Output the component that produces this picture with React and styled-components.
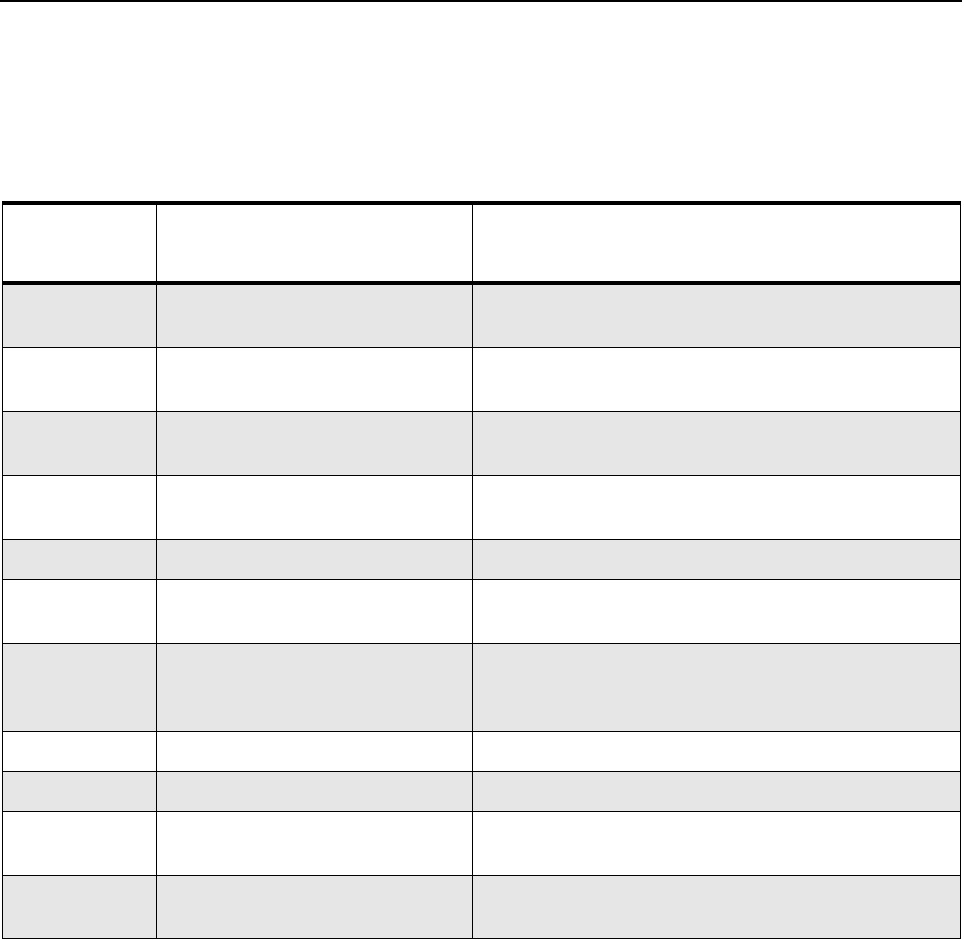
import React from "react";
import styled, { createGlobalStyle } from "styled-components";

const GlobalStyle = createGlobalStyle`
  html, body {
    margin: 0;
    padding: 0;
    background: #ffffff;
    font-family: "Liberation Sans", Arial, sans-serif;
  }
  * { box-sizing: border-box; }
`;

const Page = styled.div`
  display: flex;
  flex-direction: column;
  width: 964px;
`;

const TopRule = styled.div`
  width: 962px;
  height: 2px;
  background: #000000;
`;

const Table = styled.div`
  margin: 199px 0 0 2px;
  width: 959px;
  border-top: 4px solid #000000;
  border-left: 1px solid #000000;
  border-right: 1px solid #000000;
  display: flex;
  flex-direction: column;
`;

const Row = styled.div`
  display: grid;
  grid-template-columns: 153px 316px 488px;
  height: ${(p) => p.$h}px;
  background: ${(p) => (p.$shaded ? "#e6e6e6" : "#ffffff")};
  border-bottom: ${(p) => (p.$header ? "4px" : "1px")} solid #000000;
`;

const Cell = styled.div`
  font-size: 13px;
  color: #000000;
  padding: 6px 8px;
  & + & {
    border-left: 1px solid #000000;
  }
`;

const rows = [
  { h: 63, shaded: true },
  { h: 64, shaded: false },
  { h: 64, shaded: true },
  { h: 64, shaded: false },
  { h: 40, shaded: true },
  { h: 64, shaded: false },
  { h: 88, shaded: true },
  { h: 40, shaded: false },
  { h: 40, shaded: true },
  { h: 64, shaded: false },
  { h: 63, shaded: true },
];

export default function App() {
  return (
    <>
      <GlobalStyle />
      <Page>
        <TopRule />
        <Table>
          <Row $h={80} $header>
            <Cell />
            <Cell />
            <Cell />
          </Row>
          {rows.map((r, i) => (
            <Row key={i} $h={r.h} $shaded={r.shaded}>
              <Cell />
              <Cell />
              <Cell />
            </Row>
          ))}
        </Table>
      </Page>
    </>
  );
}
